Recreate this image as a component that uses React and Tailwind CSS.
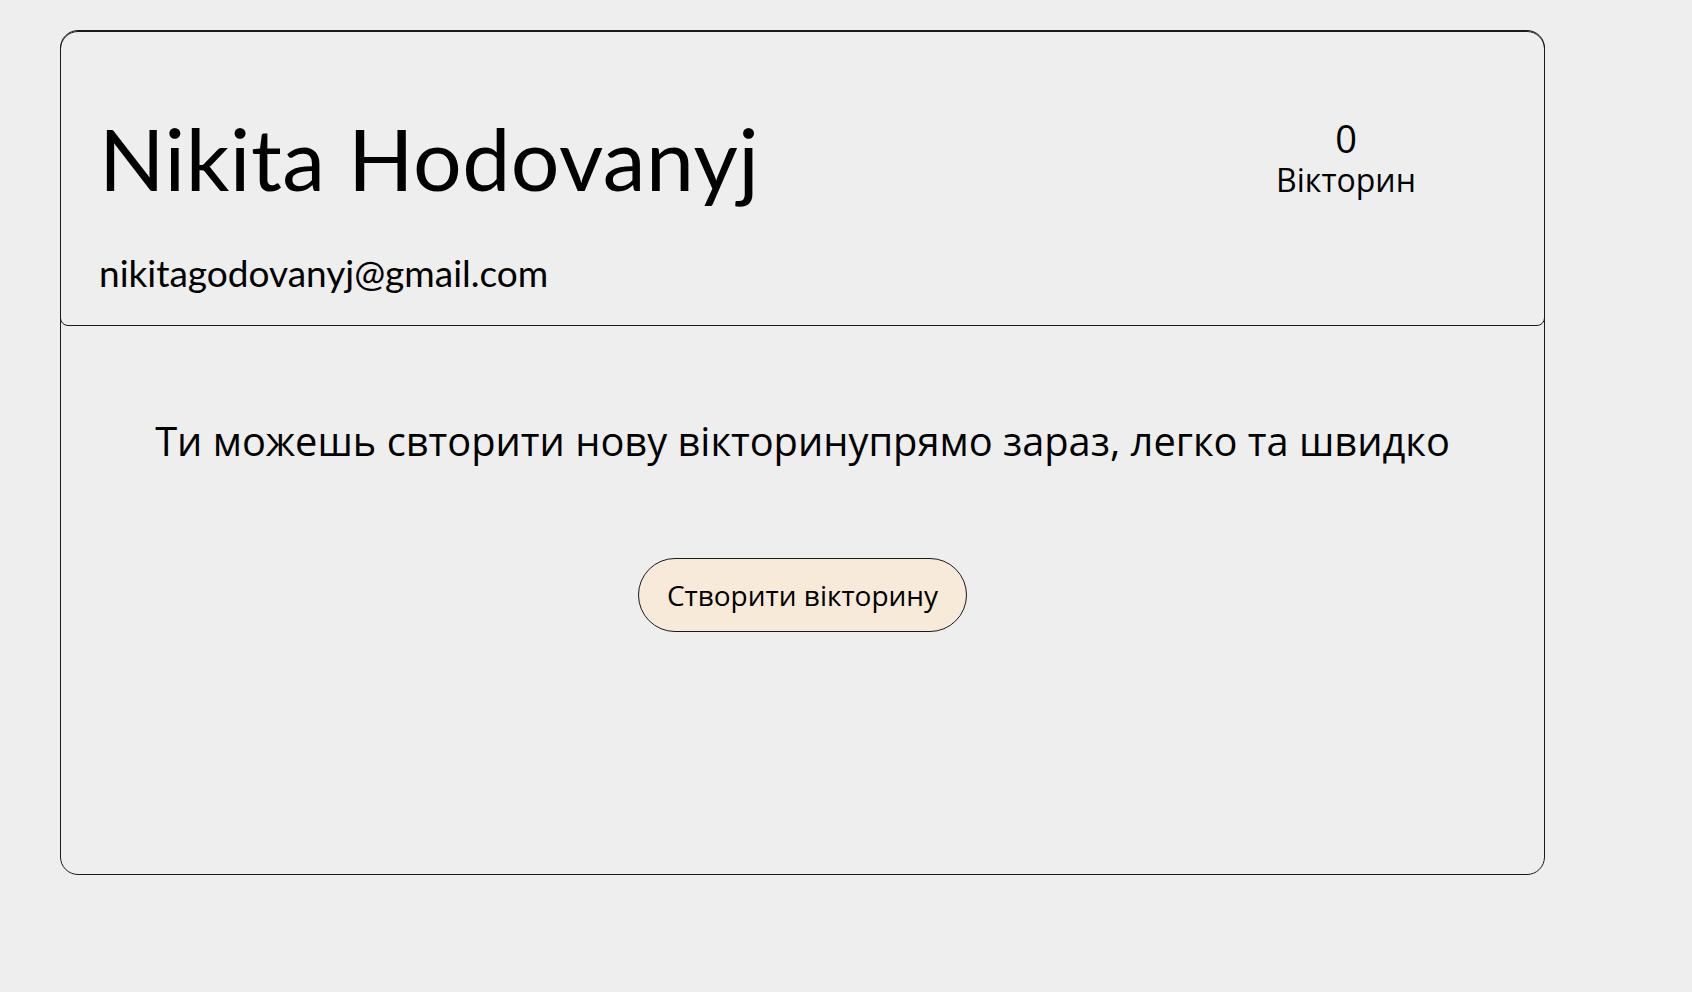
import React from "react";

export default function App() {
  const user = { name: "Nikita Hodovanyj", email: "nikitagodovanyj@gmail.com", quizzes: 0 };

  return (
    <div className="min-h-screen w-full bg-[#eeeeee] pl-[60px] pt-[30px] text-black">
      {/* Profile card */}
      <div className="w-[1485px] h-[845px] border border-[#1a1a1a] rounded-[18px] flex flex-col">
        {/* Header */}
        <div className="-mx-px border border-[#1a1a1a] rounded-t-[18px] rounded-b-[8px] h-[295px] flex justify-between pl-[38px] pr-[98px] pt-[83px]">
          <div className="flex flex-col">
            <h1 className="font-['Lato',sans-serif] text-[86px] leading-none font-normal tracking-[0.5px]">
              {user.name}
            </h1>
            <p className="font-['Lato',sans-serif] text-[37px] leading-none mt-[53px]">
              {user.email}
            </p>
          </div>
          <div className="w-[200px] flex flex-col items-center mt-[2px] font-['Open_Sans',sans-serif]">
            <span className="text-[38px] leading-[1.15]">{user.quizzes}</span>
            <span className="text-[32px] leading-[1.15] mt-[1px]">Вікторин</span>
          </div>
        </div>

        {/* Body */}
        <div className="flex flex-col items-center font-['Open_Sans',sans-serif]">
          <p className="text-[39.8px] leading-none mt-[95px]">
            Ти можешь свторити нову вікторинупрямо зараз, легко та швидко
          </p>
          <button className="mt-[97px] w-[329px] h-[74px] rounded-full border border-[#1a1a1a] bg-[#f8ead9] text-[28px] leading-none">
            Створити вікторину
          </button>
        </div>
      </div>
    </div>
  );
}
